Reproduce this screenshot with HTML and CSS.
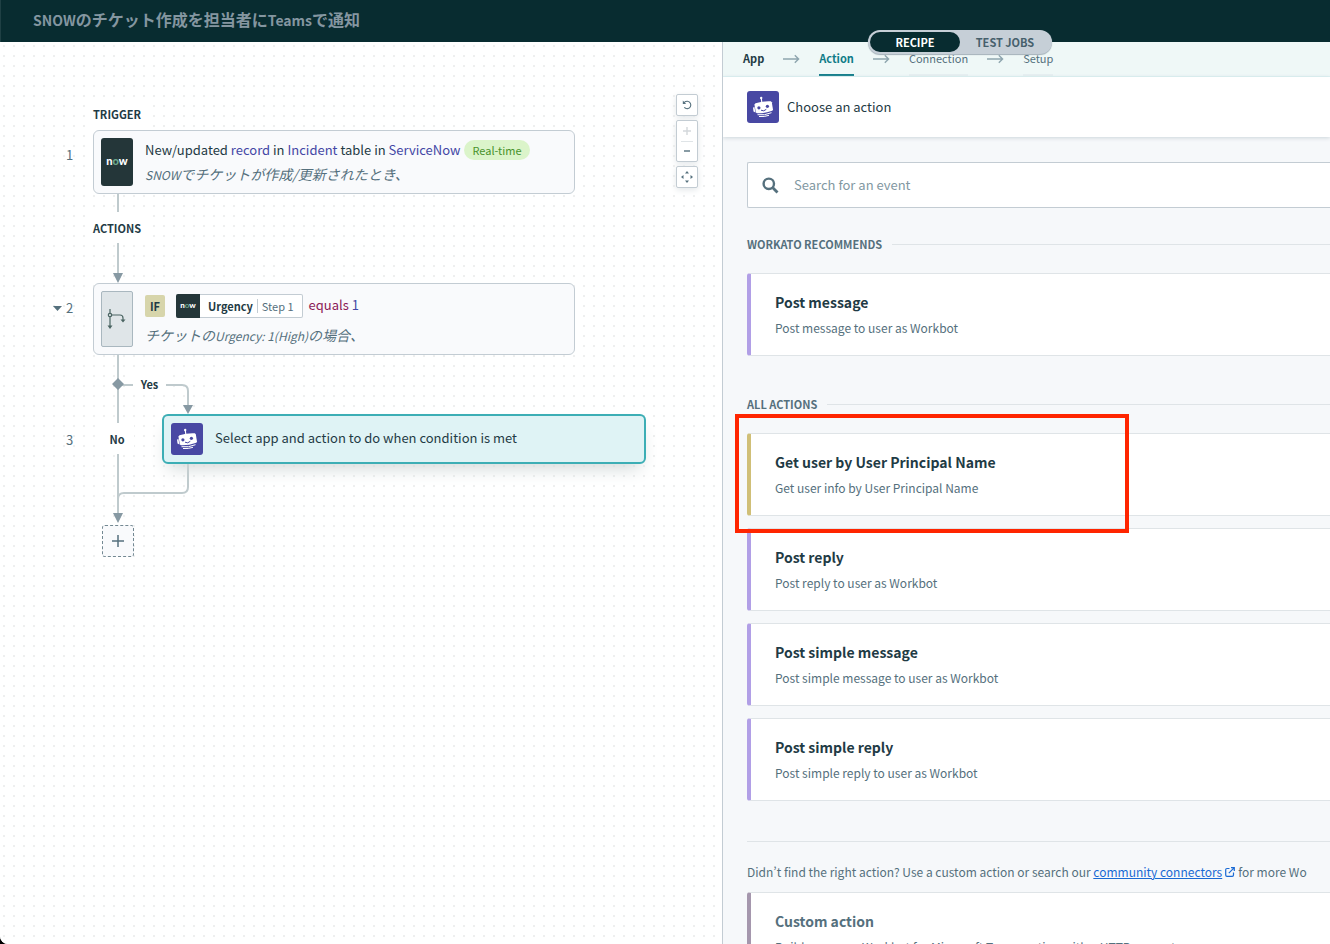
FILE: index.html
```html
<!DOCTYPE html>
<html lang="ja">
<head>
<meta charset="utf-8">
<title>SNOWのチケット作成を担当者にTeamsで通知</title>
<link rel="stylesheet" href="styles.css">
</head>
<body>
<svg class="sprite" aria-hidden="true">
  <symbol id="bot" viewBox="0 0 32 32">
    <path d="M14.300 7.500L14.900 12" stroke="#fff" stroke-width="1.100"/>
    <circle cx="14.200" cy="7" r="1.200" fill="#fff"/>
    <path d="M8.500 12.300Q16 9.900 23.800 10.300L24.800 11.200L26 18.800L25.300 19.800Q17.500 22.600 10 22.300L8.900 21.400L7.400 13.600Z" fill="#fff"/>
    <path d="M7.400 15.800L6 16.800L6.500 20.600L8.500 21.600Z" fill="#fff"/>
    <circle cx="11.900" cy="16.800" r="1.600" fill="#4848a3"/>
    <circle cx="20.400" cy="15.300" r="1.600" fill="#4848a3"/>
    <path d="M14 19.200Q16.800 20.900 19.300 18.300" stroke="#4848a3" stroke-width="1" fill="none"/>
    <path d="M10.500 23.700Q17.500 24.700 24.500 21.700M12 25.500Q17.500 26 22 24.300" stroke="#fff" stroke-width="1" fill="none"/>
  </symbol>
  <symbol id="arrow" viewBox="0 0 18 10">
    <path d="M0 5H16.500M12.500 1L16.500 5L12.500 9" stroke="#8ea5ae" stroke-width="1.500" fill="none"/>
  </symbol>
</svg>
<div class="app">
  <header class="topbar">
    <h1 class="title"><span class="latin">SNOW</span>のチケット作成を担当者に<span class="latin">Teams</span>で通知</h1>
  </header>
  <nav class="tabs">
    <button class="tab tab-on">RECIPE</button>
    <button class="tab">TEST JOBS</button>
  </nav>
  <div class="body">
    <main class="canvas">
      <svg class="wires" width="700" height="530" viewBox="0 42 700 530" fill="none" aria-hidden="true">
        <g stroke="#bfcacd" stroke-width="2">
          <path d="M118 194V212M118 243V275M118 355V423M118 454V515"/>
          <path d="M118 385H133M166 385H182Q188 385 188 391V407"/>
          <path d="M188 464V487Q188 493 182 493H124Q118 493 118 499V515"/>
        </g>
        <path d="M113 273H123L118 283ZM183 405H193L188 414ZM113 513H123L118 523ZM118 378L124 384L118 390L112 384Z" fill="#8799a3"/>
      </svg>
      <span class="label label-trigger">TRIGGER</span>
      <span class="label label-actions">ACTIONS</span>
      <span class="num num-1">1</span>
      <span class="num num-2"><svg width="9" height="5" viewBox="0 0 9 5"><path d="M0 0H9L4.500 5Z" fill="#55707d"/></svg>2</span>
      <span class="num num-3">3</span>
      <span class="branch branch-yes">Yes</span>
      <span class="branch branch-no">No</span>

      <section class="node node-trigger">
        <span class="now">n<i>o</i>w</span>
        <div class="lines">
          <p class="line">New/updated <b>record</b> in <b>Incident</b> table in <b>ServiceNow</b><span class="badge">Real-time</span></p>
          <p class="note"><span class="latin">SNOW</span>でチケットが作成/更新されたとき、</p>
        </div>
      </section>

      <section class="node node-if">
        <span class="fork"><svg width="20" height="24" viewBox="0 0 20 24" fill="none" stroke="#4a6462" stroke-width="1.200"><path d="M3 2V6M3 10V19M5 8H13Q16 8 16 11V13"/><circle cx="3" cy="8" r="1.700"/><path d="M0.500 18.500H5.500L3 22ZM13.500 12.500H18.500L16 15.500Z" fill="#4a6462" stroke="none"/></svg></span>
        <div class="lines">
          <div class="cond">
            <span class="if">IF</span>
            <span class="pill"><span class="now now-small">n<i>o</i>w</span><strong>Urgency</strong><span class="step">Step 1</span></span>
            <span class="equals">equals <b>1</b></span>
          </div>
          <p class="note">チケットの<span class="latin">Urgency: 1(High)</span>の場合、</p>
        </div>
      </section>

      <section class="node node-select">
        <svg class="bot"><use href="#bot"/></svg>
        <p class="line">Select app and action to do when condition is met</p>
      </section>

      <button class="add" aria-label="Add step"><svg width="12" height="12" viewBox="0 0 12 12"><path d="M6 0V12M0 6H12" stroke="#55707d" stroke-width="1.500"/></svg></button>

      <div class="tools">
        <button class="tool" aria-label="Undo"><svg width="10" height="10" viewBox="0 0 10 10" fill="none"><path d="M2 2.600Q3.600 1.200 5.500 1.300A3.700 3.700 0 1 1 2.300 7.400" stroke="#55707d" stroke-width="1.100"/><path d="M0.800 0.600V4H4.200Z" fill="#55707d"/></svg></button>
        <div class="zoom">
          <button aria-label="Zoom in" disabled><svg width="8" height="8" viewBox="0 0 8 8"><path d="M4 0V8M0 4H8" stroke="#d3d8db" stroke-width="1.400"/></svg></button>
          <button aria-label="Zoom out"><svg width="8" height="8" viewBox="0 0 8 8"><path d="M1 4H7" stroke="#55707d" stroke-width="1.400"/></svg></button>
        </div>
        <button class="tool" aria-label="Fit to screen"><svg width="12" height="12" viewBox="0 0 12 12" fill="#55707d"><path d="M6 0L8 2.500H4ZM6 12L8 9.500H4ZM0 6L2.500 4V8ZM12 6L9.500 4V8Z"/></svg></button>
      </div>
    </main>

    <aside class="panel">
      <nav class="steps">
        <a class="crumb crumb-done" href="#app">App</a>
        <svg class="arrow"><use href="#arrow"/></svg>
        <a class="crumb crumb-on" href="#action">Action</a>
        <svg class="arrow"><use href="#arrow"/></svg>
        <a class="crumb" href="#connection">Connection</a>
        <svg class="arrow"><use href="#arrow"/></svg>
        <a class="crumb" href="#setup">Setup</a>
      </nav>
      <div class="heading">
        <svg class="bot"><use href="#bot"/></svg>
        <h2 class="line">Choose an action</h2>
      </div>
      <div class="content">
        <label class="search">
          <svg width="17" height="17" viewBox="0 0 17 17" fill="none" stroke="#55707d"><circle cx="6.800" cy="6.800" r="5.200" stroke-width="2.400"/><path d="M10.800 10.800L15.500 15.500" stroke-width="2.800"/></svg>
          <input type="search" placeholder="Search for an event" aria-label="Search for an event">
        </label>
        <h3 class="group">WORKATO RECOMMENDS</h3>
        <div class="cards">
          <button class="card"><strong>Post message</strong><span>Post message to user as Workbot</span></button>
        </div>
        <h3 class="group group-all">ALL ACTIONS</h3>
        <div class="cards">
          <button class="card card-gold"><strong>Get user by User Principal Name</strong><span>Get user info by User Principal Name</span></button>
          <button class="card"><strong>Post reply</strong><span>Post reply to user as Workbot</span></button>
          <button class="card"><strong>Post simple message</strong><span>Post simple message to user as Workbot</span></button>
          <button class="card"><strong>Post simple reply</strong><span>Post simple reply to user as Workbot</span></button>
        </div>
        <p class="hint">Didn’t find the right action? Use a custom action or search our <a href="#community">community connectors</a><svg width="10" height="10" viewBox="0 0 10 10" fill="none" stroke="#1a6ad4" stroke-width="1.200"><path d="M4.500 1.500H2Q0.700 1.500 0.700 2.800V8Q0.700 9.300 2 9.300H7.200Q8.500 9.300 8.500 8V5.500M6 0.700H9.300V4M9.300 0.700L3.800 6.200"/></svg>for more Wo</p>
        <button class="card card-custom"><strong>Custom action</strong><span>Build your own Workbot for Microsoft Teams action with a HTTP request</span></button>
      </div>
      <div class="highlight"></div>
    </aside>
  </div>
</div>
</body>
</html>
```
FILE: styles.css
```css
* { box-sizing: border-box; }
html { background: #000; }
body, h1, h2, h3, p { margin: 0; }
body, button, input { font-family: "Noto Sans CJK JP", sans-serif; font-size: 14px; color: #1f3b45; }
body { height: 100vh; overflow: hidden; line-height: 20px; }
button { margin: 0; padding: 0; border: 0; background: none; cursor: pointer; line-height: inherit; }
a { color: inherit; text-decoration: none; }
i { font-style: normal; }
.sprite { position: absolute; width: 0; height: 0; }

.app { position: relative; display: flex; flex-direction: column; height: 100vh; overflow: hidden; background: #fff; border-bottom-left-radius: 8px; }
.topbar { flex: none; display: flex; align-items: center; height: 42px; padding: 0 32px 3px; background: #082c30; border-left: 1px solid #1f4044; }
.title { font-size: 16px; line-height: 24px; font-weight: 700; color: #8496a0; }
.title .latin { font-size: 14px; }

.tabs { position: absolute; z-index: 2; top: 30px; left: 868px; display: flex; padding: 2px; border-radius: 13px; background: #c6cfd7; box-shadow: 0 1px 1px #a3b0b8; }
.tab { width: 90px; height: 20px; padding-bottom: 1px; border-radius: 10px; font-size: 11px; line-height: 18px; font-weight: 700; color: #46606c; }
.tab-on { background: #082c30; color: #fff; }

.body { flex: 1; display: flex; min-height: 0; }
.canvas { position: relative; flex: 722 1 0; min-width: 0; overflow: hidden; background-color: #fff; background-image: conic-gradient(from 90deg at 8px 8px, #eeefef 25%, transparent 0); background-size: 10px 10px; background-position: -5px -5px; }
.wires { position: absolute; top: 0; left: 0; }

.label { position: absolute; left: 93px; width: 58px; height: 30px; line-height: 30px; background: #fff; font-size: 11px; font-weight: 700; }
.label-trigger { top: 57px; }
.label-actions { top: 171px; }
.num { position: absolute; display: flex; align-items: center; gap: 4px; font-size: 13px; color: #55707d; }
.num-1 { top: 103px; left: 66px; }
.num-2 { top: 256px; left: 53px; }
.num-3 { top: 388px; left: 66px; }
.branch { position: absolute; background: #fff; text-align: center; font-size: 11px; font-weight: 700; }
.branch-yes { top: 332px; left: 133px; width: 33px; }
.branch-no { top: 381px; left: 100px; width: 34px; height: 31px; line-height: 33px; }

.node { position: absolute; display: flex; background: #f9fafc; border: 1px solid #c3ccd3; border-radius: 6px; padding: 7px; gap: 12px; width: 482px; }
.node-trigger { top: 88px; left: 93px; height: 64px; }
.node-if { top: 241px; left: 93px; height: 72px; }
.node-select { top: 372px; left: 162px; width: 484px; height: 50px; align-items: center; border: 2px solid #3caeb5; background: #dff3f5; box-shadow: 0 10px 18px -6px #cfd7d7; }
.node-select .line { padding-bottom: 2px; }
.now { flex: none; display: flex; align-items: center; justify-content: center; width: 32px; height: 48px; padding-bottom: 2px; border-radius: 3px; background: #243639; color: #fff; font-family: Lato, sans-serif; font-weight: 900; font-size: 11px; }
.now i { color: #6aa78b; }
.now-small { width: 24px; height: 24px; border-radius: 2px 0 0 2px; font-size: 8px; }
.lines { display: flex; flex-direction: column; gap: 4px; white-space: nowrap; }
.line { font-size: 13px; font-weight: 400; line-height: 20px; color: #1f3b45; }
.node-trigger .line { padding-top: 2px; }
.line b, .equals b { font-weight: 400; color: #4347a5; }
.badge { display: inline-block; margin-left: 4px; padding: 0 8px; border-radius: 10px; background: #dbf4ca; color: #47922a; font-size: 11px; line-height: 20px; }
.note { font-size: 14px; font-style: italic; color: #55707d; }
.note .latin { font-size: 12px; }
.fork { flex: none; display: flex; align-items: center; justify-content: center; width: 32px; height: 56px; border: 1px solid #a9b7bf; border-radius: 2px; background: #dfe5e8; }
.cond { display: flex; align-items: center; padding-top: 3px; margin-bottom: 3px; }
.if { width: 20px; height: 22px; border-radius: 2px; background: #d7d5ab; font-size: 11px; font-weight: 700; line-height: 22px; text-align: center; }
.pill { display: flex; align-items: center; height: 24px; margin: 0 6px 0 11px; padding-right: 8px; background: #fff; border: 1px solid #c3ccd3; border-left: 0; border-radius: 2px; font-size: 11px; }
.pill strong { margin: 0 4px 0 8px; }
.step { padding-left: 4px; border-left: 1px solid #c3ccd3; line-height: 14px; color: #55707d; }
.equals { padding-bottom: 2px; font-size: 13px; color: #8c1a57; }
.bot { flex: none; width: 32px; height: 32px; border-radius: 3px; background: #4848a3; }
.add { position: absolute; top: 483px; left: 102px; display: flex; align-items: center; justify-content: center; width: 32px; height: 32px; background: #f9fafc; border: 1px dashed #738892; border-radius: 3px; }

.tools { position: absolute; top: 52px; right: 24px; display: flex; flex-direction: column; gap: 4px; width: 22px; }
.tool, .zoom { display: flex; align-items: center; justify-content: center; height: 22px; background: #fff; border: 1px solid #c3ccd3; border-radius: 2px; box-shadow: 0 2px 6px #e3e7e9; }
.zoom { flex-direction: column; height: 42px; }
.zoom button { display: flex; flex: 1; align-items: center; justify-content: center; width: 12px; }
.zoom button + button { border-top: 1px solid #dfe4e7; }

.panel { position: relative; flex: 607 1 0; display: flex; flex-direction: column; min-width: 0; overflow: hidden; border-left: 1px solid #c3ccd3; background: #f6f8fa; white-space: nowrap; }
.steps { flex: none; display: flex; align-items: center; gap: 19px; height: 35px; padding-left: 20px; background: #eff8f7; border-bottom: 1px solid #dcf3f4; }
.crumb { height: 34px; border-bottom: 2px solid #e6f0f1; font-size: 11px; line-height: 32px; color: #55707d; }
.crumb-done { border-color: transparent; font-weight: 700; color: #1f3b45; }
.crumb-on { border-color: #0f7c88; font-weight: 700; color: #0f7c88; }
.arrow { width: 17px; height: 10px; }
.heading { flex: none; position: relative; display: flex; align-items: center; gap: 8px; height: 60px; padding-left: 24px; background: #fff; box-shadow: 0 1px 4px #ccd5da; }
.content { display: flex; flex-direction: column; padding: 25px 0 0 24px; }
.search { display: flex; align-items: center; gap: 15px; height: 46px; padding-left: 14px; background: #fff; border: 1px solid #c3ccd3; border-right: 0; border-radius: 2px 0 0 2px; }
.search input { flex: 1; min-width: 0; border: 0; outline: 0; padding: 0 0 2px; background: none; font-size: 13px; }
.search input::placeholder { color: #8298a2; opacity: 1; }
.group { display: flex; align-items: center; gap: 10px; margin: 26px 0 19px; font-size: 11px; line-height: 20px; font-weight: 700; color: #55707d; }
.group::after { content: ""; flex: 1; height: 1px; background: #dfe4e7; }
.group-all { margin-top: 38px; }
.cards { display: flex; flex-direction: column; gap: 12px; }
.card { display: flex; flex-direction: column; align-items: flex-start; gap: 4px; padding: 16px 0 17px 24px; background: #fff; border: solid #dfe4e7; border-width: 1px 0; border-left: 4px solid #b19fe6; border-radius: 3px 0 0 3px; }
.card strong { font-size: 14px; line-height: 24px; font-weight: 700; }
.card span { font-size: 12px; line-height: 20px; color: #55707d; }
.card-gold { border-left-color: #d0bf77; }
.card-custom { border-left-color: #a597ad; }
.card-custom strong { color: #55707d; }
.hint { margin-top: 40px; padding: 20px 0 10px; border-top: 1px solid #dfe4e7; font-size: 12px; color: #55707d; }
.hint a { color: #1a6ad4; text-decoration: underline; }
.hint svg { margin: 0 3px; }
.highlight { position: absolute; top: 372px; left: 12px; width: 394px; height: 119px; border: 4px solid #ff2500; pointer-events: none; }
```
